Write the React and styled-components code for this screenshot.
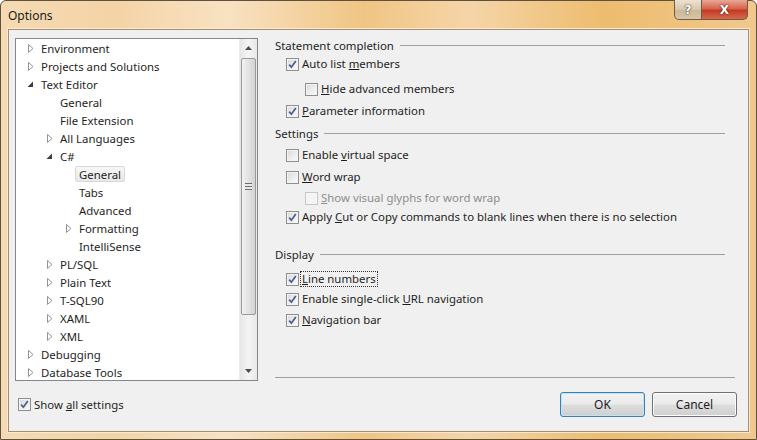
import React from "react";
import styled, { createGlobalStyle } from "styled-components";

const GlobalStyle = createGlobalStyle`
  html, body { margin: 0; padding: 0; }
  body {
    width: 757px;
    height: 440px;
    overflow: hidden;
    font-family: "Segoe UI", "Noto Sans", "DejaVu Sans", sans-serif;
    font-size: 11.4px;
    color: #000;
  }
`;

const treeItems = [
  { label: "Environment", level: 0, arrow: "closed" },
  { label: "Projects and Solutions", level: 0, arrow: "closed" },
  { label: "Text Editor", level: 0, arrow: "open" },
  { label: "General", level: 1 },
  { label: "File Extension", level: 1 },
  { label: "All Languages", level: 1, arrow: "closed" },
  { label: "C#", level: 1, arrow: "open" },
  { label: "General", level: 2, selected: true },
  { label: "Tabs", level: 2 },
  { label: "Advanced", level: 2 },
  { label: "Formatting", level: 2, arrow: "closed" },
  { label: "IntelliSense", level: 2 },
  { label: "PL/SQL", level: 1, arrow: "closed" },
  { label: "Plain Text", level: 1, arrow: "closed" },
  { label: "T-SQL90", level: 1, arrow: "closed" },
  { label: "XAML", level: 1, arrow: "closed" },
  { label: "XML", level: 1, arrow: "closed" },
  { label: "Debugging", level: 0, arrow: "closed" },
  { label: "Database Tools", level: 0, arrow: "closed" },
];

const Window = styled.div`
  width: 757px;
  height: 440px;
  box-sizing: border-box;
  display: flex;
  flex-direction: column;
  border: 1px solid #5f5140;
  border-radius: 6px 6px 0 0;
  background: linear-gradient(
    90deg,
    #f5dab3 0%,
    #f4d4a6 15%,
    #f8e2c2 30%,
    #f0c584 48%,
    #f5d5a8 62%,
    #edbc6e 80%,
    #f0c88f 100%
  );
  padding: 0 7px 7px 7px;
`;

const TitleBar = styled.div`
  height: 28px;
  display: flex;
  align-items: flex-start;
  justify-content: space-between;
`;

const Title = styled.div`
  padding-top: 6px;
  font-size: 12px;
  color: #1a1a1a;
`;

const Caption = styled.div`
  display: flex;
  margin-right: 1px;
  margin-top: -1px;
`;

const CapButton = styled.div`
  height: 20px;
  width: ${(p) => p.$w}px;
  box-sizing: border-box;
  display: flex;
  align-items: center;
  justify-content: center;
  border: 1px solid #6c5c48;
  border-top: none;
  font-family: "DejaVu Sans", sans-serif;
  font-weight: bold;
  font-size: 12px;
  ${(p) =>
    p.$close
      ? `
    background: linear-gradient(180deg, #e9a796 0%, #d7654d 45%, #c43b22 55%, #d66a4c 100%);
    border-radius: 0 0 5px 0;
    border-left: none;
    color: #fff;
    text-shadow: 0 0 2px #5a1a10, 0 0 1px #5a1a10;
  `
      : `
    background: linear-gradient(180deg, #efe2cf 0%, #d9c7ad 50%, #cdb898 55%, #d8c6a8 100%);
    border-radius: 0 0 0 5px;
    color: #fff;
    text-shadow: 0 0 2px #3c3c3c, 0 0 1px #3c3c3c;
  `}
`;

const Client = styled.div`
  flex: 1;
  display: flex;
  flex-direction: column;
  background: #f0f0f0;
  border: 1px solid #a88e6c;
  box-shadow: 0 0 0 1px #f8ead6;
`;

const Main = styled.div`
  display: flex;
  padding: 8px 13px 0 6px;
  gap: 17px;
`;

const Tree = styled.div`
  width: 243px;
  height: 343px;
  box-sizing: border-box;
  border: 1px solid #828790;
  background: #fff;
  display: flex;
  overflow: hidden;
`;

const TreeList = styled.div`
  flex: 1;
`;

const TreeRow = styled.div`
  height: 18px;
  display: flex;
  align-items: center;
  padding-left: ${(p) => 8 + p.$level * 19}px;
  white-space: nowrap;
`;

const ArrowBox = styled.div`
  width: 13px;
  height: 18px;
  display: flex;
  align-items: center;
  justify-content: center;
  margin-right: 3px;
`;

const TreeLabel = styled.span`
  padding: 0 3px;
  margin-left: -3px;
  height: 16px;
  line-height: 15px;
  box-sizing: border-box;
  border: 1px solid ${(p) => (p.$selected ? "#d9d9d9" : "transparent")};
  border-radius: 2px;
  background: ${(p) =>
    p.$selected ? "linear-gradient(180deg, #f7f7f7, #e8e8e8)" : "transparent"};
  color: #1e1e1e;
`;

const ScrollBar = styled.div`
  width: 17px;
  display: flex;
  flex-direction: column;
  background: linear-gradient(90deg, #e6e6e6, #f4f4f4 50%, #e8e8e8);
  border-left: 1px solid #ededed;
`;

const ScrollArrow = styled.div`
  height: 18px;
  display: flex;
  align-items: center;
  justify-content: center;
`;

const Track = styled.div`
  flex: 1;
  display: flex;
  flex-direction: column;
  padding: 1px 0;
`;

const Thumb = styled.div`
  height: 257px;
  margin: 0 1px;
  box-sizing: border-box;
  border: 1px solid #9a9a9a;
  border-radius: 2px;
  background: linear-gradient(90deg, #f2f2f2, #e2e2e2 50%, #d2d2d2);
  display: flex;
  align-items: center;
  justify-content: center;
`;

const Grip = styled.div`
  width: 7px;
  height: 7px;
  background: repeating-linear-gradient(
    180deg,
    #6d6d6d 0,
    #6d6d6d 1px,
    #e9e9e9 1px,
    #e9e9e9 3px
  );
`;

const Panel = styled.div`
  flex: 1;
  height: 343px;
  margin-top: -1px;
  display: flex;
  flex-direction: column;
`;

const GroupHeader = styled.div`
  height: 16px;
  display: flex;
  align-items: center;
  margin-top: ${(p) => p.$mt || 0}px;
  margin-right: 10px;
  color: #1e1e1e;
  &::after {
    content: "";
    flex: 1;
    height: 1px;
    background: #a0a0a0;
    margin-left: 6px;
    margin-top: 1px;
  }
`;

const OptionRow = styled.div`
  height: 16px;
  display: flex;
  align-items: center;
  margin-top: ${(p) => p.$mt}px;
  padding-left: ${(p) => p.$pad}px;
  color: ${(p) => (p.$disabled ? "#8d8d8d" : "#1e1e1e")};
`;

const Box = styled.span`
  width: 13px;
  height: 13px;
  box-sizing: border-box;
  flex-shrink: 0;
  border: 1px solid ${(p) => (p.$disabled ? "#c6c6c6" : "#8e8f8f")};
  background: ${(p) =>
    p.$disabled
      ? "#f4f4f4"
      : "linear-gradient(135deg, #d8d8d8 0%, #ececec 50%, #fafafa 100%)"};
  box-shadow: inset 0 0 0 1px ${(p) => (p.$disabled ? "#f7f7f7" : "#f4f4f4")};
  display: flex;
  align-items: center;
  justify-content: center;
  margin-right: 3px;
`;

const Label = styled.span`
  line-height: 14px;
  padding: 0 1px;
  margin-left: -1px;
  outline: ${(p) => (p.$focus ? "1px dotted #333" : "none")};
  white-space: nowrap;
`;

const Separator = styled.div`
  margin-top: auto;
  margin-bottom: 2px;
  height: 1px;
  background: #a0a0a0;
`;

const Footer = styled.div`
  flex: 1;
  display: flex;
  align-items: center;
  justify-content: space-between;
  padding: 0 11px 3px 9px;
`;

const Buttons = styled.div`
  display: flex;
  gap: 7px;
`;

const Button = styled.div`
  width: 85px;
  height: 25px;
  box-sizing: border-box;
  display: flex;
  align-items: center;
  justify-content: center;
  border-radius: 3px;
  font-size: 12px;
  color: #1e1e1e;
  border: 1px solid ${(p) => (p.$default ? "#3c7fb1" : "#707070")};
  background: linear-gradient(180deg, #f2f2f2 0%, #ebebeb 48%, #dddddd 52%, #cfcfcf 100%);
  box-shadow: inset 0 0 0 1px ${(p) => (p.$default ? "#bfe4f4" : "#fcfcfc")};
`;

function Arrow({ type }) {
  if (type === "open") {
    return (
      <svg width="7" height="7" viewBox="0 0 7 7">
        <polygon points="6,0.5 6,6 0.5,6" fill="#3c3c3c" />
      </svg>
    );
  }
  if (type === "closed") {
    return (
      <svg width="6" height="9" viewBox="0 0 6 9">
        <polygon points="0.5,0.5 5,4.5 0.5,8.5" fill="#fff" stroke="#939393" />
      </svg>
    );
  }
  return null;
}

function Check({ checked, disabled }) {
  return (
    <Box $disabled={disabled}>
      {checked && (
        <svg width="9" height="9" viewBox="0 0 9 9">
          <path
            d="M1.2 4.6 L3.4 7.2 L7.8 1"
            fill="none"
            stroke="#4a5d8f"
            strokeWidth="1.7"
          />
        </svg>
      )}
    </Box>
  );
}

function Option({ mt = 0, pad = 11, checked, disabled, focus, children }) {
  return (
    <OptionRow $mt={mt} $pad={pad} $disabled={disabled}>
      <Check checked={checked} disabled={disabled} />
      <Label $focus={focus}>{children}</Label>
    </OptionRow>
  );
}

export default function App() {
  return (
    <>
      <GlobalStyle />
      <Window>
        <TitleBar>
          <Title>Options</Title>
          <Caption>
            <CapButton $w={28}>?</CapButton>
            <CapButton $w={46} $close>
              X
            </CapButton>
          </Caption>
        </TitleBar>
        <Client>
          <Main>
            <Tree>
              <TreeList>
                {treeItems.map((item, i) => (
                  <TreeRow key={i} $level={item.level}>
                    <ArrowBox>
                      <Arrow type={item.arrow} />
                    </ArrowBox>
                    <TreeLabel $selected={item.selected}>{item.label}</TreeLabel>
                  </TreeRow>
                ))}
              </TreeList>
              <ScrollBar>
                <ScrollArrow>
                  <svg width="7" height="4" viewBox="0 0 7 4">
                    <polygon points="0,4 3.5,0 7,4" fill="#4d4d4d" />
                  </svg>
                </ScrollArrow>
                <Track>
                  <Thumb>
                    <Grip />
                  </Thumb>
                </Track>
                <ScrollArrow>
                  <svg width="7" height="4" viewBox="0 0 7 4">
                    <polygon points="0,0 3.5,4 7,0" fill="#4d4d4d" />
                  </svg>
                </ScrollArrow>
              </ScrollBar>
            </Tree>
            <Panel>
              <GroupHeader>Statement completion</GroupHeader>
              <Option mt={3} checked>
                Auto list <u>m</u>embers
              </Option>
              <Option mt={9} pad={30}>
                <u>H</u>ide advanced members
              </Option>
              <Option mt={6} checked>
                <u>P</u>arameter information
              </Option>
              <GroupHeader $mt={6}>Settings</GroupHeader>
              <Option mt={6}>
                Enable <u>v</u>irtual space
              </Option>
              <Option mt={6}>
                <u>W</u>ord wrap
              </Option>
              <Option mt={5} pad={30} disabled>
                <u>S</u>how visual glyphs for word wrap
              </Option>
              <Option mt={3} checked>
                Apply <u>C</u>ut or Copy commands to blank lines when there is no selection
              </Option>
              <GroupHeader $mt={21}>Display</GroupHeader>
              <Option mt={9} checked focus>
                <u>L</u>ine numbers
              </Option>
              <Option mt={4} checked>
                Enable single-click <u>U</u>RL navigation
              </Option>
              <Option mt={5} checked>
                <u>N</u>avigation bar
              </Option>
              <Separator />
            </Panel>
          </Main>
          <Footer>
            <Option pad={0} checked>
              Show <u>a</u>ll settings
            </Option>
            <Buttons>
              <Button $default>OK</Button>
              <Button>Cancel</Button>
            </Buttons>
          </Footer>
        </Client>
      </Window>
    </>
  );
}
